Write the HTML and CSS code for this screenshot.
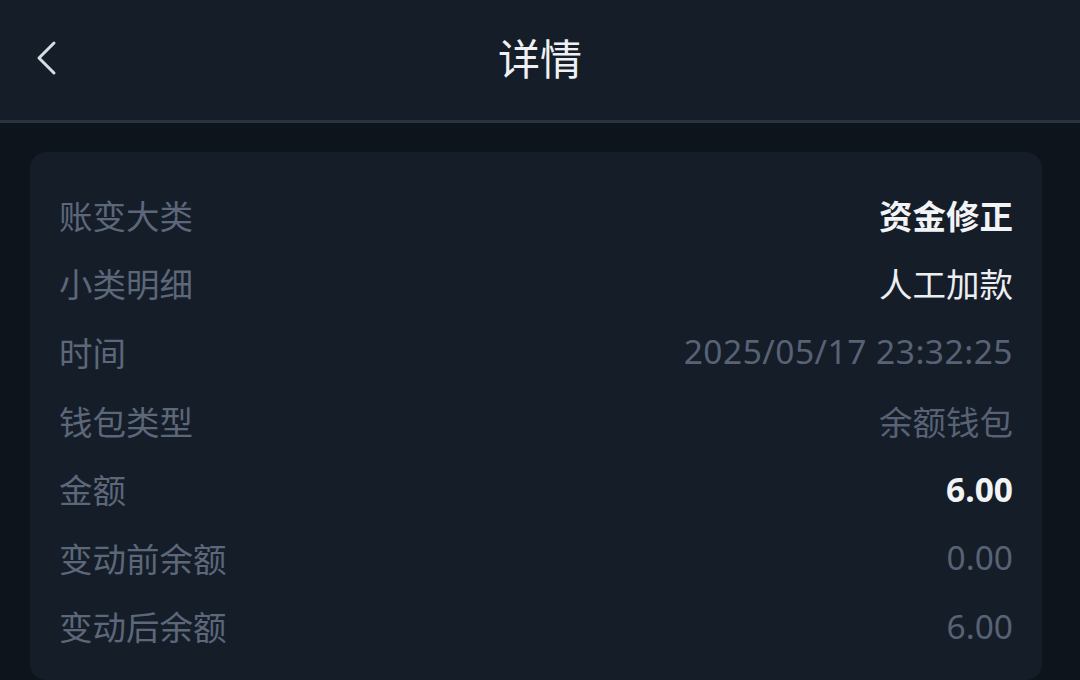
FILE: index.html
```html
<!DOCTYPE html>
<html lang="zh-CN">
<head>
  <meta charset="UTF-8">
  <title>详情</title>
  <link rel="stylesheet" href="styles.css">
</head>
<body>

  <header class="topbar">
    <a class="back" href="#">
      <svg width="22" height="36" viewBox="0 0 22 36">
        <path d="M19 3 L4 18 L19 33" fill="none" stroke="#d8dde3" stroke-width="3" stroke-linecap="round" stroke-linejoin="round"/>
      </svg>
    </a>
    <h1>详情</h1>
  </header>

  <div class="card">
    <div class="row">
      <span class="label">账变大类</span>
      <span class="value strong">资金修正</span>
    </div>
    <div class="row">
      <span class="label">小类明细</span>
      <span class="value light">人工加款</span>
    </div>
    <div class="row">
      <span class="label">时间</span>
      <span class="value date">2025/05/17 23:32:25</span>
    </div>
    <div class="row">
      <span class="label">钱包类型</span>
      <span class="value">余额钱包</span>
    </div>
    <div class="row">
      <span class="label">金额</span>
      <span class="value strong">6.00</span>
    </div>
    <div class="row">
      <span class="label">变动前余额</span>
      <span class="value">0.00</span>
    </div>
    <div class="row">
      <span class="label">变动后余额</span>
      <span class="value">6.00</span>
    </div>
  </div>

</body>
</html>
```

FILE: styles.css
```css
* {
  box-sizing: border-box;
}

body {
  margin: 0;
  padding: 0;
  font-family: "Noto Sans", "Noto Sans CJK SC", sans-serif;
  background-color: #0e141c;
  min-height: 100vh;
}

.topbar {
  position: relative;
  height: 123px;
  background-color: #151d29;
  border-bottom: 3px solid #2a3440;
  display: flex;
  align-items: center;
  justify-content: center;
}

.back {
  position: absolute;
  left: 35px;
  top: 40px;
  display: block;
  width: 22px;
  height: 36px;
}

.topbar h1 {
  margin: 0 0 8px;
  font-size: 42px;
  font-weight: 400;
  color: #eef0f3;
  letter-spacing: 0;
}

.card {
  margin: 29px 38px 0 30px;
  background-color: #151d29;
  border-radius: 16px;
  padding: 28px 29px 20px;
}

.row {
  height: 68.6px;
  display: flex;
  align-items: center;
  justify-content: space-between;
  font-size: 33.5px;
}

.label {
  color: #5c6779;
}

.value {
  color: #586274;
}

.value.date {
  letter-spacing: 0.5px;
}

.value.strong {
  color: #f2f3f5;
  font-weight: 700;
}

.value.light {
  color: #eceef1;
  font-weight: 400;
}
```
